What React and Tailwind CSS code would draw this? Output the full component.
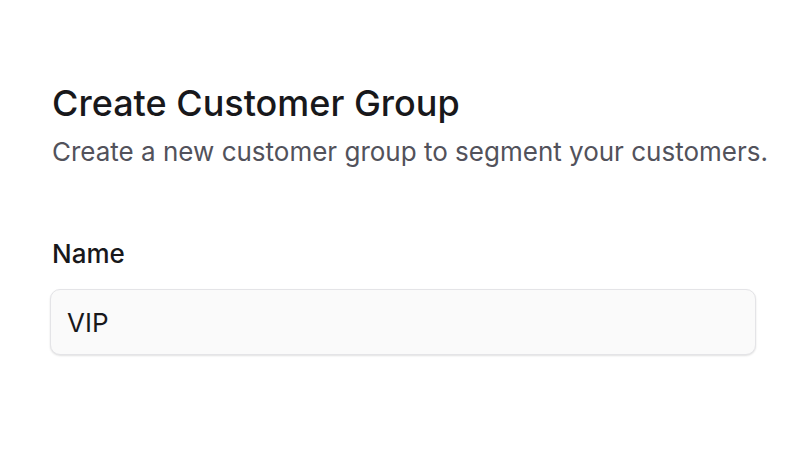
export default function App() {
  return (
    <div className="min-h-screen bg-white px-[50px] pt-[81px] font-['Inter',sans-serif]">
      <div className="px-[2px]">
        <h1 className="text-[36px] leading-[44px] font-medium text-[#18181b]">Create Customer Group</h1>
        <p className="mt-[11px] whitespace-nowrap text-[26px] leading-[32px] text-[#52525b]">
          Create a new customer group to segment your customers.
        </p>
      </div>

      <div className="mt-[70px] w-[706px]">
        <label className="block px-[2px] text-[26px] leading-[32px] font-medium text-[#18181b]">Name</label>
        <div className="mt-[19px] h-[66px] rounded-[10px] border border-[#e4e4e7] bg-[#fafafa] px-[16px] flex items-center shadow-[0_1px_2px_rgba(0,0,0,0.12)]">
          <span className="text-[26px] text-[#18181b]">VIP</span>
        </div>
      </div>
    </div>
  );
}
